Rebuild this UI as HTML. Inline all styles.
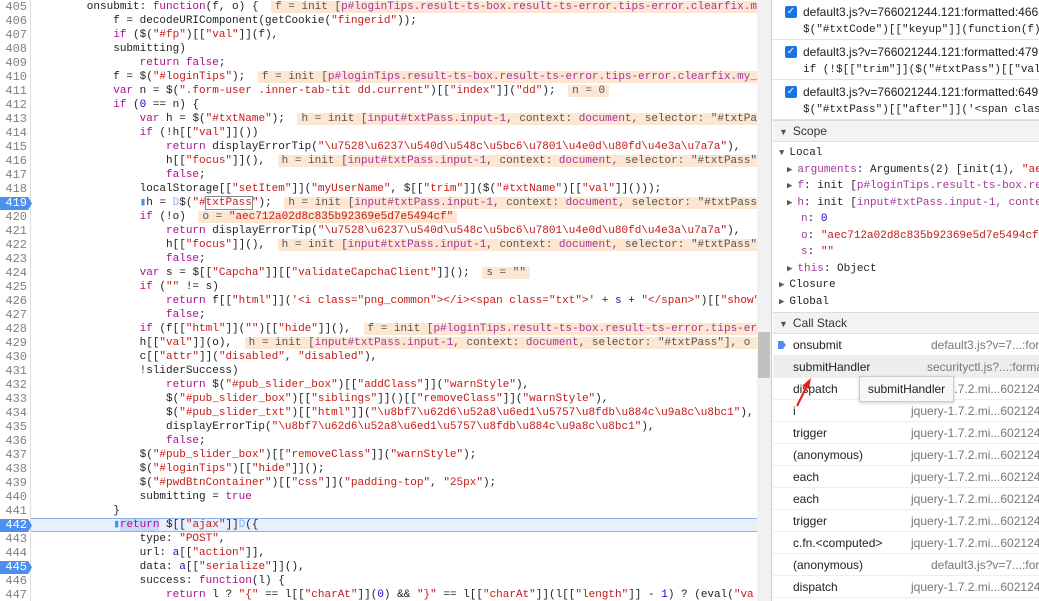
<!DOCTYPE html>
<html><head><meta charset="utf-8"><style>
*{margin:0;padding:0;box-sizing:border-box}
body{width:1039px;height:601px;overflow:hidden;background:#fff;font-family:"Liberation Sans",sans-serif;position:relative}
#ed{position:absolute;left:0;top:0;width:757px;height:601px;overflow:hidden}
.g{position:absolute;left:0;top:0;width:31px;height:601px;border-right:1px solid #ddd;background:#fff}
.ln{position:absolute;left:0;width:27px;text-align:right;font:12px/14px "Liberation Mono",monospace;color:#808080}
.bp{position:absolute;left:0;width:32px;height:13px;background:#4d8ff0;clip-path:polygon(0 0,88% 0,100% 50%,88% 100%,0 100%)}
.bpt{color:#fff}
pre{position:absolute;left:34px;top:0;font:11px/14px "Liberation Mono",monospace;color:#222;white-space:pre}
.k{color:#aa0d91}.s{color:#c41a16}.n{color:#1c00cf}.b{color:#1a1aa6}
.v{background:#fde6d2;color:#555;margin-left:6px;padding:0 4px}
.p{color:#a2379a}
#l442{position:absolute;left:31px;top:518px;width:726px;height:14px;background:#e8f0fd;border-top:1px solid #8ab0ef;border-bottom:1px solid #8ab0ef}
#sb{position:absolute;left:757px;top:0;width:15px;height:601px;background:#f1f1f1;border-right:1px solid #ccc}
#th{position:absolute;left:758px;top:332px;width:12px;height:46px;background:#c1c1c1}
#rp{position:absolute;left:773px;top:0;width:266px;height:601px;overflow:hidden;font-size:12px;color:#222;white-space:nowrap}
.bk{height:40px;border-bottom:1px solid #e0e0e0;padding:4px 0 0 30px;position:relative;font-size:12px;line-height:16px}
.bk .m{font:11px/14px "Liberation Mono",monospace;color:#222}
.cb{position:absolute;left:12px;top:6px;width:12px;height:12px;background:#1a73e8;border-radius:2px;color:#fff;font-size:10px;line-height:12px;text-align:center}
.hd{height:22px;background:#f3f3f3;border-bottom:1px solid #ddd;border-top:1px solid #ddd;line-height:20px;padding-left:6px;color:#333}
.tri{font-size:9px;color:#555;margin-right:5px}
.mo{font:11px "Liberation Mono",monospace}
.sr{height:16.5px;line-height:16.5px}
.cs{height:22px;line-height:22px;border-bottom:1px solid #eee;position:relative;padding-left:20px;color:#222}
.cs span{position:absolute;left:138px;color:#777}
</style></head><body>
<div id="ed">
<div id="l442"></div>
<div class="g"></div>
<div class="ln" style="top:0">405<br>406<br>407<br>408<br>409<br>410<br>411<br>412<br>413<br>414<br>415<br>416<br>417<br>418<br><br>420<br>421<br>422<br>423<br>424<br>425<br>426<br>427<br>428<br>429<br>430<br>431<br>432<br>433<br>434<br>435<br>436<br>437<br>438<br>439<br>440<br>441<br><br>443<br>444<br><br>446<br>447</div>
<div class="bp" style="top:197px"></div><div class="ln bpt" style="top:196px">419</div>
<div class="bp" style="top:519px"></div><div class="ln bpt" style="top:518px">442</div>
<div class="bp" style="top:561px"></div><div class="ln bpt" style="top:560px">445</div>
<pre>        onsubmit: <span class="k">function</span>(f, o) { <span class="v">f = init [<span class="p">p#loginTips.result-ts-box.result-ts-error.tips-error.clearfix.my_</span></span>
            f = decodeURIComponent(getCookie(<span class="s">"fingerid"</span>));
            <span class="k">if</span> ($(<span class="s">"#fp"</span>)[[<span class="s">"val"</span>]](f),
            submitting)
                <span class="k">return</span> <span class="k">false</span>;
            f = $(<span class="s">"#loginTips"</span>); <span class="v">f = init [<span class="p">p#loginTips.result-ts-box.result-ts-error.tips-error.clearfix.my_</span></span>
            <span class="k">var</span> n = $(<span class="s">".form-user .inner-tab-tit dd.current"</span>)[[<span class="s">"index"</span>]](<span class="s">"dd"</span>); <span class="v">n = 0</span>
            <span class="k">if</span> (<span class="n">0</span> == n) {
                <span class="k">var</span> h = $(<span class="s">"#txtName"</span>); <span class="v">h = init [<span class="p">input#txtPass.input-1</span>, context: <span class="p">document</span>, selector: "#txtPass"</span>
                <span class="k">if</span> (!h[[<span class="s">"val"</span>]]())
                    <span class="k">return</span> displayErrorTip(<span class="s">"\u7528\u6237\u540d\u548c\u5bc6\u7801\u4e0d\u80fd\u4e3a\u7a7a"</span>),
                    h[[<span class="s">"focus"</span>]](), <span class="v">h = init [<span class="p">input#txtPass.input-1</span>, context: <span class="p">document</span>, selector: "#txtPass"</span>
                    <span class="k">false</span>;
                localStorage[[<span class="s">"setItem"</span>]](<span class="s">"myUserName"</span>, $[[<span class="s">"trim"</span>]]($(<span class="s">"#txtName"</span>)[[<span class="s">"val"</span>]]()));
                <span style="color:#4d8ff0">&#9646;</span>h = <span style="color:#8ab0ef">D</span>$(<span class="s">"#<span style="outline:1px solid #888;color:#c41a16">txtPass</span>"</span>); <span class="v">h = init [<span class="p">input#txtPass.input-1</span>, context: <span class="p">document</span>, selector: "#txtPass"</span>
                <span class="k">if</span> (!o) <span class="v">o = <span class="s">"aec712a02d8c835b92369e5d7e5494cf"</span></span>
                    <span class="k">return</span> displayErrorTip(<span class="s">"\u7528\u6237\u540d\u548c\u5bc6\u7801\u4e0d\u80fd\u4e3a\u7a7a"</span>),
                    h[[<span class="s">"focus"</span>]](), <span class="v">h = init [<span class="p">input#txtPass.input-1</span>, context: <span class="p">document</span>, selector: "#txtPass"</span>
                    <span class="k">false</span>;
                <span class="k">var</span> s = $[[<span class="s">"Capcha"</span>]][[<span class="s">"validateCapchaClient"</span>]](); <span class="v">s = ""</span>
                <span class="k">if</span> (<span class="s">""</span> != s)
                    <span class="k">return</span> f[[<span class="s">"html"</span>]](<span class="s">'&lt;i class="png_common"&gt;&lt;/i&gt;&lt;span class="txt"&gt;'</span> + <span class="b">s</span> + <span class="s">"&lt;/span&gt;"</span>)[[<span class="s">"show"</span>
                    <span class="k">false</span>;
                <span class="k">if</span> (f[[<span class="s">"html"</span>]](<span class="s">""</span>)[[<span class="s">"hide"</span>]](), <span class="v">f = init [<span class="p">p#loginTips.result-ts-box.result-ts-error.tips-error</span></span>
                h[[<span class="s">"val"</span>]](o), <span class="v">h = init [<span class="p">input#txtPass.input-1</span>, context: <span class="p">document</span>, selector: "#txtPass"], o = </span>
                c[[<span class="s">"attr"</span>]](<span class="s">"disabled"</span>, <span class="s">"disabled"</span>),
                !sliderSuccess)
                    <span class="k">return</span> $(<span class="s">"#pub_slider_box"</span>)[[<span class="s">"addClass"</span>]](<span class="s">"warnStyle"</span>),
                    $(<span class="s">"#pub_slider_box"</span>)[[<span class="s">"siblings"</span>]]()[[<span class="s">"removeClass"</span>]](<span class="s">"warnStyle"</span>),
                    $(<span class="s">"#pub_slider_txt"</span>)[[<span class="s">"html"</span>]](<span class="s">"\u8bf7\u62d6\u52a8\u6ed1\u5757\u8fdb\u884c\u9a8c\u8bc1"</span>),
                    displayErrorTip(<span class="s">"\u8bf7\u62d6\u52a8\u6ed1\u5757\u8fdb\u884c\u9a8c\u8bc1"</span>),
                    <span class="k">false</span>;
                $(<span class="s">"#pub_slider_box"</span>)[[<span class="s">"removeClass"</span>]](<span class="s">"warnStyle"</span>);
                $(<span class="s">"#loginTips"</span>)[[<span class="s">"hide"</span>]]();
                $(<span class="s">"#pwdBtnContainer"</span>)[[<span class="s">"css"</span>]](<span class="s">"padding-top"</span>, <span class="s">"25px"</span>);
                submitting = <span class="k">true</span>
            }
            <span style="color:#4d8ff0">&#9646;</span><span style="background:#c8d8f8"><span class="k">return</span></span> $[[<span class="s">"ajax"</span>]]<span style="color:#8ab0ef">D</span>({
                type: <span class="s">"POST"</span>,
                url: <span class="b">a</span>[[<span class="s">"action"</span>]],
                data: <span class="b">a</span>[[<span class="s">"serialize"</span>]](),
                success: <span class="k">function</span>(l) {
                    <span class="k">return</span> l ? <span class="s">"{"</span> == l[[<span class="s">"charAt"</span>]](<span class="n">0</span>) &amp;&amp; <span class="s">"}"</span> == l[[<span class="s">"charAt"</span>]](l[[<span class="s">"length"</span>]] - <span class="n">1</span>) ? (eval(<span class="s">"va</span></pre>
</div>
<div id="sb"></div><div id="th"></div>
<div id="rp">
<div class="bk"><div class="cb">✓</div>default3.js?v=766021244.121:formatted:466<br><span class="m">$("#txtCode")[["keyup"]](function(f) {</span></div>
<div class="bk"><div class="cb">✓</div>default3.js?v=766021244.121:formatted:479<br><span class="m">if (!$[["trim"]]($("#txtPass")[["val"]]</span></div>
<div class="bk" style="height:40px"><div class="cb">✓</div>default3.js?v=766021244.121:formatted:649<br><span class="m">$("#txtPass")[["after"]]('&lt;span class</span></div>
<div class="hd"><span class="tri">▼</span>Scope</div>
<div style="padding:3px 0 2px 6px" class="mo">
<div class="sr"><span class="tri">▼</span>Local</div>
<div class="sr" style="padding-left:8px"><span class="tri">▶</span><span class="p">arguments</span>: Arguments(2) [init(1), <span class="s">"aec712</span></div>
<div class="sr" style="padding-left:8px"><span class="tri">▶</span><span class="p">f</span>: init [<span class="p">p#loginTips.result-ts-box.result</span></div>
<div class="sr" style="padding-left:8px"><span class="tri">▶</span><span class="p">h</span>: init [<span class="p">input#txtPass.input-1, context</span></div>
<div class="sr" style="padding-left:22px"><span class="p">n</span>: <span class="n">0</span></div>
<div class="sr" style="padding-left:22px"><span class="p">o</span>: <span class="s">"aec712a02d8c835b92369e5d7e5494cf"</span></div>
<div class="sr" style="padding-left:22px"><span class="p">s</span>: <span class="s">""</span></div>
<div class="sr" style="padding-left:8px"><span class="tri">▶</span><span class="p">this</span>: Object</div>
<div class="sr"><span class="tri">▶</span>Closure</div>
<div class="sr"><span class="tri">▶</span>Global</div>
</div>
<div class="hd"><span class="tri">▼</span>Call Stack</div>
<div class="cs"><i style="position:absolute;left:5px;top:7px;width:8px;height:8px;background:#4d8ff0;clip-path:polygon(0 0,60% 0,100% 50%,60% 100%,0 100%)"></i>onsubmit<span style="left:158px">default3.js?v=7...:forma</span></div>
<div class="cs" style="background:#eee">submitHandler<span style="left:154px">securityctl.js?...:forma</span></div>
<div class="cs">dispatch<span>jquery-1.7.2.mi...602124</span></div>
<div class="cs">i<span>jquery-1.7.2.mi...602124</span></div>
<div class="cs">trigger<span>jquery-1.7.2.mi...602124</span></div>
<div class="cs">(anonymous)<span>jquery-1.7.2.mi...602124</span></div>
<div class="cs">each<span>jquery-1.7.2.mi...602124</span></div>
<div class="cs">each<span>jquery-1.7.2.mi...602124</span></div>
<div class="cs">trigger<span>jquery-1.7.2.mi...602124</span></div>
<div class="cs">c.fn.&lt;computed&gt;<span>jquery-1.7.2.mi...602124</span></div>
<div class="cs">(anonymous)<span style="left:158px">default3.js?v=7...:forma</span></div>
<div class="cs">dispatch<span>jquery-1.7.2.mi...602124</span></div>
</div>
<div style="position:absolute;left:859px;top:376px;width:95px;height:26px;background:#f7f7f7;border:1px solid #ccc;box-shadow:0 1px 3px rgba(0,0,0,.2);font-size:12px;line-height:24px;text-align:center;color:#222">submitHandler</div>
<svg style="position:absolute;left:790px;top:372px" width="30" height="40"><path d="M7 34 L17 14" stroke="#e02020" stroke-width="2"/><path d="M21 6 L12 14 L19 17 Z" fill="#e02020"/></svg>
</body></html>
